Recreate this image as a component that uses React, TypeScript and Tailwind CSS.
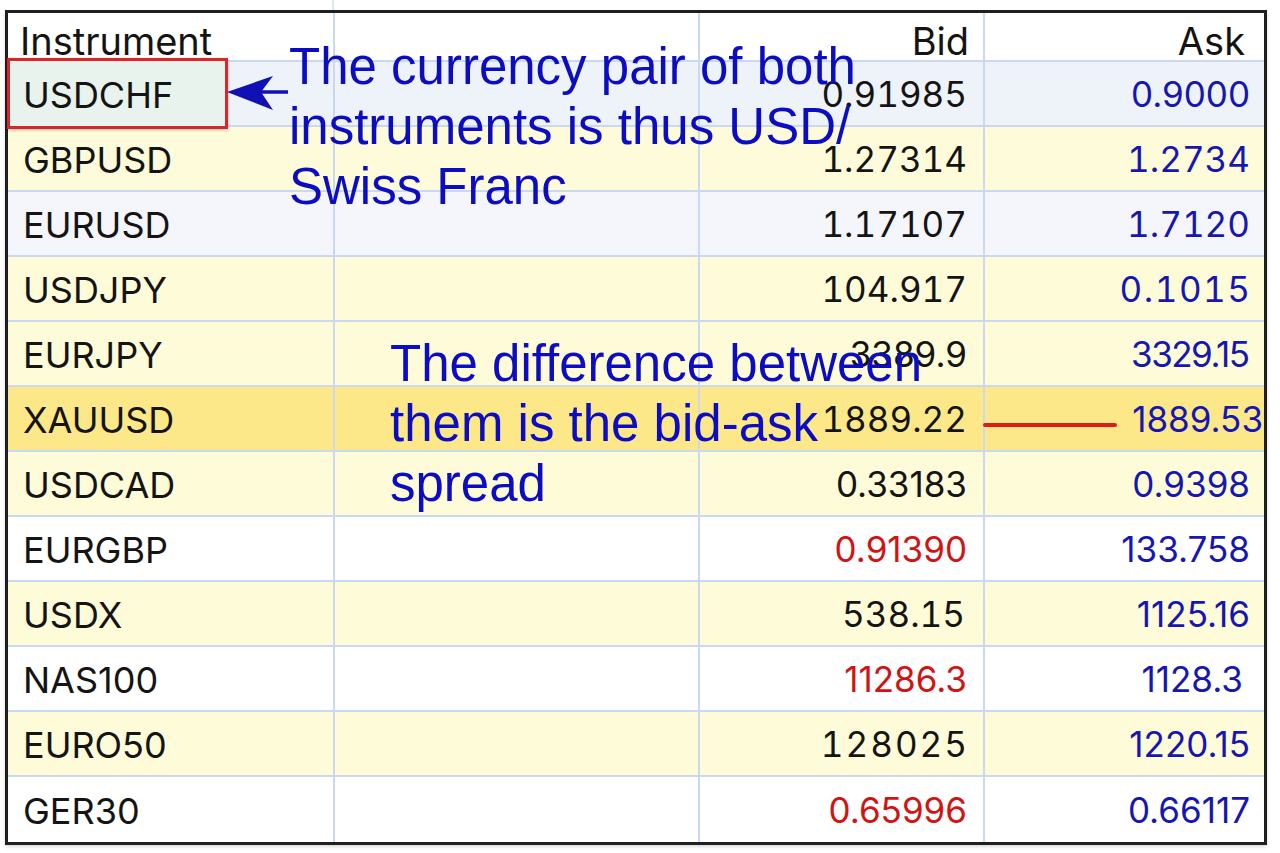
import React from "react";

type Row = {
  name: string;
  bid: string;
  ask: string;
  bg: string;
  bidRed?: boolean;
  bidCls?: string;
  askCls?: string;
  askPad?: string;
};

// the source sheet mixes tabular and proportional figures, so cells pick their own
const rows: Row[] = [
  { name: "USDCHF", bid: "0.91985", ask: "0.9000", bg: "bg-[#eef2f9]", bidCls: "tabular-nums" },
  { name: "GBPUSD", bid: "1.27314", ask: "1.2734", bg: "bg-[#fdfbd9]", bidCls: "tabular-nums", askCls: "tabular-nums" },
  { name: "EURUSD", bid: "1.17107", ask: "1.7120", bg: "bg-[#f4f6fc]", bidCls: "tabular-nums", askCls: "tabular-nums" },
  { name: "USDJPY", bid: "104.917", ask: "0.1015", bg: "bg-[#fefbd8]", bidCls: "tabular-nums", askCls: "tabular-nums tracking-[1.5px] -mr-[1.5px]" },
  { name: "EURJPY", bid: "3389.9", ask: "3329.15", bg: "bg-[#fefbd8]", askCls: "tracking-[-1.5px] mr-[1.5px]" },
  { name: "XAUUSD", bid: "1889.22", ask: "1889.53", bg: "bg-[#fde889]", askPad: "pr-[1px]", bidCls: "tabular-nums" },
  { name: "USDCAD", bid: "0.33183", ask: "0.9398", bg: "bg-[#fefbd8]" },
  { name: "EURGBP", bid: "0.91390", ask: "133.758", bg: "bg-white", bidRed: true },
  { name: "USDX", bid: "538.15", ask: "1125.16", bg: "bg-[#fefbd8]", bidCls: "tabular-nums mr-[2px]" },
  { name: "NAS100", bid: "11286.3", ask: "1128.3", bg: "bg-white", bidRed: true, askPad: "pr-[21px]" },
  { name: "EURO50", bid: "128025", ask: "1220.15", bg: "bg-[#fefbd8]", bidCls: "tabular-nums tracking-[2px] -mr-[2px]" },
  { name: "GER30", bid: "0.65996", ask: "0.66117", bg: "bg-white", bidRed: true },
];

const ArrowLeft = () => (
  <svg
    className="absolute left-[217px] top-[61px]"
    width="66"
    height="40"
    viewBox="0 0 66 40"
  >
    <line x1="36" y1="18" x2="63" y2="18" stroke="#1010b4" strokeWidth="3.5" />
    <polygon points="2,18 48,2 36,18 48,36" fill="#1010b4" />
  </svg>
);

export default function App() {
  return (
    <div className="min-h-[853px] w-[1280px] bg-white font-['Inter',sans-serif] text-[#141414]">
      <div className="h-[10px]">
        <div className="ml-[332px] h-full w-[2px] bg-[#dfe6f5]" />
      </div>
      <div className="relative ml-[5px] w-[1262px] border-[3px] border-[#1f1f1f] shadow-[0_2px_3px_rgba(0,0,0,0.15)]">
        {/* header */}
        <div className="grid h-[49px] grid-cols-[327px_365px_285px_279px] border-b-2 border-[#cbd8f2] bg-white text-[38px]">
          <div className="flex items-center border-r-2 border-[#cbd8f2] pb-[4px] pl-[12px]">Instrument</div>
          <div className="border-r-2 border-[#cbd8f2]" />
          <div className="flex items-center justify-end border-r-2 border-[#cbd8f2] pb-[4px] pr-[14px]">Bid</div>
          <div className="flex items-center justify-end pb-[4px] pr-[19px]">Ask</div>
        </div>

        {rows.map((r, i) => (
          <div
            key={r.name}
            className={`grid h-[65px] grid-cols-[327px_365px_285px_279px] text-[35px] ${r.bg} ${
              i < rows.length - 1 ? "border-b-2 border-[#cbd8f2]" : ""
            }`}
          >
            <div className="relative flex items-center border-r-2 border-[#cbd8f2] pl-[15px] pt-[2px] text-[36px]">
              {i === 0 && (
                <div className="absolute -left-px -top-[4px] h-[71px] w-[221px] border-[3px] border-[#d8262b] bg-[#e8f3ed] shadow-[0_1px_3px_rgba(0,0,0,0.25)]" />
              )}
              <span className="relative">{r.name}</span>
            </div>
            <div className="border-r-2 border-[#cbd8f2]" />
            <div
              className={`flex items-center justify-end border-r-2 border-[#cbd8f2] pr-[16px] pt-[2px] ${
                r.bidRed ? "text-[#d01414]" : ""
              }`}
            >
              <span className={r.bidCls}>{r.bid}</span>
            </div>
            <div className={`flex items-center justify-end pt-[2px] text-[#1616b2] ${r.askPad ?? "pr-[14px]"}`}>
              <span className={r.askCls}>{r.ask}</span>
            </div>
          </div>
        ))}

        {/* annotations */}
        <ArrowLeft />
        <div className="absolute left-[281px] top-[24px] whitespace-nowrap font-['Liberation_Sans',Arial,sans-serif] text-[51px] leading-[60px] text-[#0c0cc2]">
          The currency pair of both
          <br />
          instruments is thus USD/
          <br />
          Swiss Franc
        </div>
        <div className="absolute left-[382px] top-[321px] whitespace-nowrap font-['Liberation_Sans',Arial,sans-serif] text-[51px] leading-[60px] text-[#0c0cc2]">
          The difference between
          <br />
          them is the bid-ask
          <br />
          spread
        </div>
        <div className="absolute left-[975px] top-[410px] h-[4px] w-[134px] rounded-full bg-[#dd1c1c]" />
      </div>
    </div>
  );
}
